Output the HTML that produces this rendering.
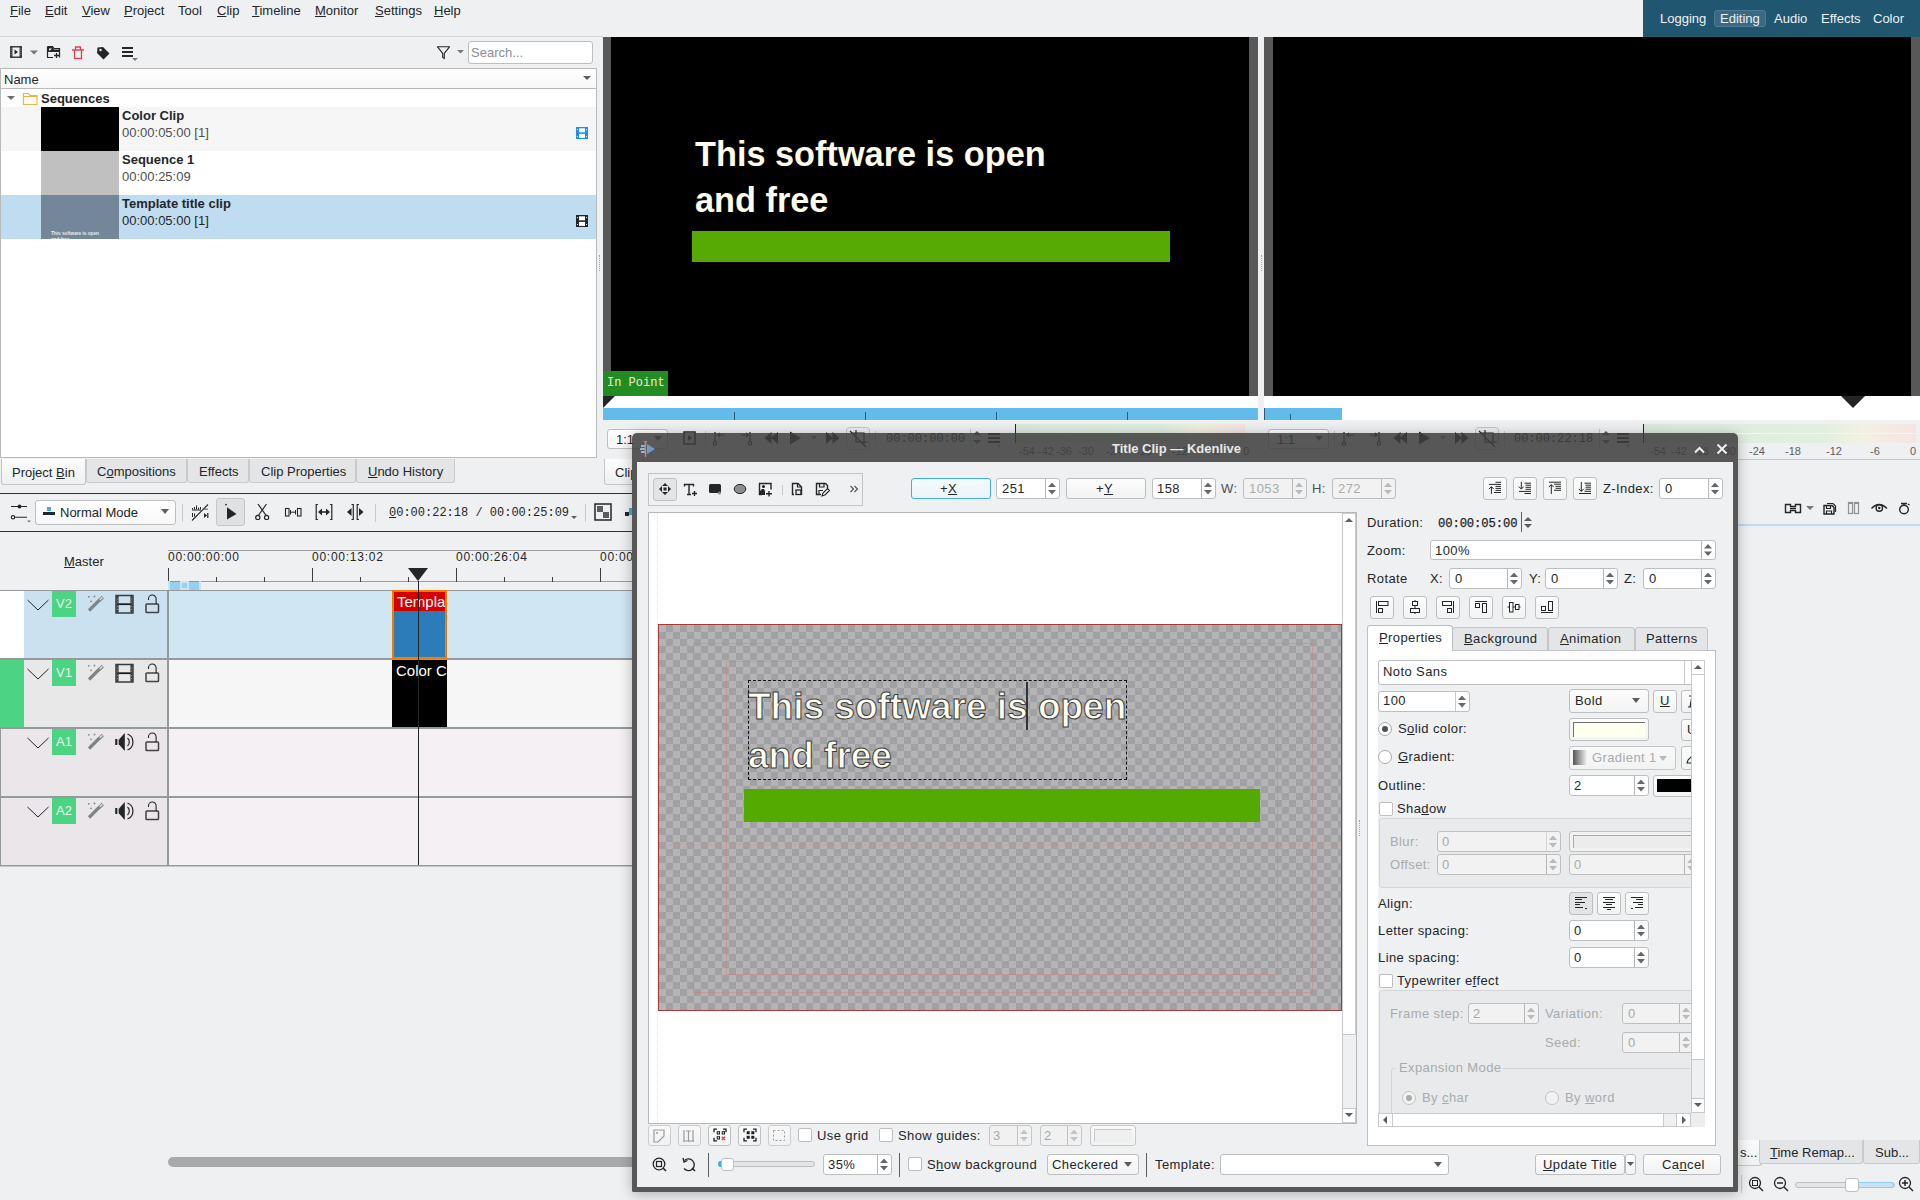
<!DOCTYPE html>
<html><head><meta charset="utf-8">
<style>
*{box-sizing:border-box;margin:0;padding:0}
html,body{width:1920px;height:1200px;overflow:hidden;background:#eff0f1;font-family:"Liberation Sans",sans-serif;font-size:13px;color:#232629;position:relative}
.a{position:absolute}
.t{position:absolute;white-space:nowrap;line-height:1}
.mono{font-family:"Liberation Mono",monospace}
u{text-decoration:underline;text-underline-offset:1px;text-decoration-thickness:1px}
.tab{position:absolute;background:#e3e5e7;border:1px solid #c3c5c7;border-bottom:none;border-radius:3px 3px 0 0;color:#232629}
.spin{position:absolute;background:#fff;border:1px solid #bcbebf;border-radius:3px}
.spin::before{content:"";position:absolute;right:13px;top:0;bottom:0;width:1px;background:#b4b6b8}
.spin::after{content:"";position:absolute;right:3px;top:50%;width:8px;height:12px;margin-top:-6px;background:#65686a;
clip-path:polygon(0 38%,50% 0,100% 38%,50% 38%,50% 62%,100% 62%,50% 100%,0 62%,50% 62%,50% 38%)}
.spin.dis::after{background:#b8babc}
.spin.nosp::before,.spin.nosp::after{display:none}
.meter{background:linear-gradient(#f3f6f3,#f3f6f3) 0 9px/100% 1px no-repeat,linear-gradient(90deg,#dde9dd,#dfeddf 20%,#e0efe0 65%,#f2f1e2 80%,#f6e4e4)}
#dlg .t:not(.mono){letter-spacing:.4px}
#sc .t{margin-top:-1px}
.btn{position:absolute;background:linear-gradient(#fcfcfc,#f2f3f3);border:1px solid #bcbebf;border-radius:3px}
.sep{position:absolute;width:1px;background:#c8c9ca}
</style></head><body>

<!-- MENU BAR -->
<div id="menu">
<span class="t" style="left:10px;top:4px"><u>F</u>ile</span>
<span class="t" style="left:45px;top:4px"><u>E</u>dit</span>
<span class="t" style="left:82px;top:4px"><u>V</u>iew</span>
<span class="t" style="left:124px;top:4px"><u>P</u>roject</span>
<span class="t" style="left:178px;top:4px">Tool</span>
<span class="t" style="left:217px;top:4px"><u>C</u>lip</span>
<span class="t" style="left:252px;top:4px"><u>T</u>imeline</span>
<span class="t" style="left:315px;top:4px"><u>M</u>onitor</span>
<span class="t" style="left:375px;top:4px"><u>S</u>ettings</span>
<span class="t" style="left:434px;top:4px"><u>H</u>elp</span>
</div>
<div class="a" style="left:0;top:36px;width:603px;height:1px;background:#d4d5d6"></div>

<!-- workspace switcher -->
<div class="a" style="left:1643px;top:0;width:277px;height:37px;background:#215670"></div>
<div class="a" style="left:1714px;top:10px;width:52px;height:17px;background:#3b6983;border:1px solid #4a7a94;border-radius:3px"></div>
<span class="t" style="left:1660px;top:12px;color:#eef1f3">Logging</span>
<span class="t" style="left:1720px;top:12px;color:#eef1f3">Editing</span>
<span class="t" style="left:1774px;top:12px;color:#eef1f3">Audio</span>
<span class="t" style="left:1821px;top:12px;color:#eef1f3">Effects</span>
<span class="t" style="left:1873px;top:12px;color:#eef1f3">Color</span>

<!-- BIN -->
<div id="bin">
<!-- toolbar icons -->
<svg class="a" style="left:8px;top:44px" width="134" height="18" viewBox="0 0 134 18">
 <rect x="2" y="2" width="12" height="12" fill="#3a3c3e"/><rect x="4.5" y="3.5" width="7" height="9" fill="#eff0f1"/><path d="M3.2 4v8M12.8 4v8" stroke="#8a8c8e" stroke-width=".8" stroke-dasharray="1 1"/><path d="M6.5 5.5v5l3.5-2.5z" fill="#232629"/>
 <path d="M22 6.5h8l-4 4z" fill="#747678"/>
 <path d="M39.5 2.5h5l1.5 2h5.5v9M39.5 2.5v11h5.5" fill="none" stroke="#232629" stroke-width="1.2"/><path d="M40 3h4.5l1.5 2.5h5.5v2.5h-11.5z" fill="#232629"/><path d="M41 4.5h3l-2 2h-1z" fill="#eff0f1"/><path d="M48.5 9v5M46 11.5h5" stroke="#232629" stroke-width="1.3"/>
 <path d="M64 6h12M67.5 6V3h5v3M66.5 6v8.5h7V6" fill="none" stroke="#da4453" stroke-width="1.3"/>
 <path d="M89.5 3.5l5.5-.5 6.5 6.5-6 6-6.5-6.5z" fill="#232629"/><circle cx="92.5" cy="6" r="1.2" fill="#eff0f1"/>
 <path d="M114 4h11M114 8h11M114 12h11" stroke="#232629" stroke-width="1.8"/><path d="M124 14h6l-3 3z" fill="#747678"/>
</svg>
<svg class="a" style="left:435px;top:45px" width="32" height="15" viewBox="0 0 32 15">
 <path d="M2.5 1.8h12l-5.2 6.6v5.2l-1.6-1.2V8.4z" fill="none" stroke="#232629" stroke-width="1.1" stroke-linejoin="round"/>
 <path d="M22 5l3.5 3.5 3.5-3.5z" fill="#747678"/>
</svg>
<div class="a" style="left:468px;top:41px;width:125px;height:23px;background:#fff;border:1px solid #bcbebf;border-radius:3px"></div>
<span class="t" style="left:471px;top:46px;color:#888e93;font-size:13px">Search...</span>

<!-- list -->
<div class="a" style="left:0;top:68px;width:597px;height:390px;background:#fff;border:1px solid #b8babc"></div>
<div class="a" style="left:1px;top:69px;width:595px;height:20px;background:linear-gradient(#fff,#f7f7f7);border-bottom:1px solid #b8babc"></div>
<span class="t" style="left:4px;top:73px">Name</span>
<svg class="a" style="left:582px;top:75px" width="10" height="6"><path d="M1 1h8l-4 4z" fill="#5b5d5f"/></svg>
<svg class="a" style="left:6px;top:95px" width="10" height="6"><path d="M1 1h8l-4 4z" fill="#6b6d6f"/></svg>
<svg class="a" style="left:22px;top:91px" width="16" height="15"><path d="M1.5 2.5h5l1.5 2h7v9h-13.5z M1.5 5.5h13.5" fill="none" stroke="#f7b13e" stroke-width="1.2"/></svg>
<span class="t" style="left:41px;top:92px;font-weight:bold">Sequences</span>

<div class="a" style="left:1px;top:107px;width:595px;height:44px;background:#f6f6f6"></div>
<div class="a" style="left:1px;top:195px;width:595px;height:44px;background:#c0dcf1"></div>
<div class="a" style="left:41px;top:107px;width:78px;height:44px;background:#000"></div>
<div class="a" style="left:41px;top:151px;width:78px;height:44px;background:#c0c0c0"></div>
<div class="a" style="left:41px;top:195px;width:78px;height:44px;background:#74879a;overflow:hidden"><div class="t" style="left:10px;top:36px;font-size:4.7px;font-weight:bold;color:#e8ecef;line-height:6px">This software is open<br>and free</div></div>
<span class="t" style="left:122px;top:109px;font-weight:bold">Color Clip</span>
<span class="t" style="left:122px;top:126px;color:#4d4f51">00:00:05:00 [1]</span>
<span class="t" style="left:122px;top:153px;font-weight:bold">Sequence 1</span>
<span class="t" style="left:122px;top:170px;color:#4d4f51">00:00:25:09</span>
<span class="t" style="left:122px;top:197px;font-weight:bold">Template title clip</span>
<span class="t" style="left:122px;top:214px;color:#232629">00:00:05:00 [1]</span>
<svg class="a" style="left:576px;top:127px" width="12" height="12" viewBox="0 0 12 12"><rect width="12" height="12" fill="#1d8ef2"/><rect x="3" y="1.3" width="6" height="4" fill="#fff"/><rect x="3" y="6.9" width="6" height="4" fill="#fff"/><circle cx="1.5" cy="2.6" r=".6" fill="#fff"/><circle cx="10.5" cy="2.6" r=".6" fill="#fff"/><circle cx="1.5" cy="9.5" r=".6" fill="#fff"/><circle cx="10.5" cy="9.5" r=".6" fill="#fff"/></svg>
<svg class="a" style="left:576px;top:215px" width="12" height="12" viewBox="0 0 12 12"><rect width="12" height="12" fill="#232629"/><rect x="3" y="1.3" width="6" height="4" fill="#fff"/><rect x="3" y="6.9" width="6" height="4" fill="#fff"/><circle cx="1.5" cy="2.6" r=".6" fill="#fff"/><circle cx="10.5" cy="2.6" r=".6" fill="#fff"/><circle cx="1.5" cy="9.5" r=".6" fill="#fff"/><circle cx="10.5" cy="9.5" r=".6" fill="#fff"/></svg>

<!-- bin tabs -->
<div class="a" style="left:1px;top:459px;width:85px;height:26px;background:linear-gradient(#fcfcfc,#eff0f1);border:1px solid #c3c5c7;border-top:none;border-radius:0 0 3px 3px"></div>
<div class="a" style="left:86px;top:459px;width:101px;height:24px;background:#e3e5e7;border:1px solid #c8cacc;border-top:none;border-radius:0 0 3px 3px"></div>
<div class="a" style="left:187px;top:459px;width:62px;height:24px;background:#e3e5e7;border:1px solid #c8cacc;border-top:none;border-radius:0 0 3px 3px"></div>
<div class="a" style="left:249px;top:459px;width:107px;height:24px;background:#e3e5e7;border:1px solid #c8cacc;border-top:none;border-radius:0 0 3px 3px"></div>
<div class="a" style="left:356px;top:459px;width:99px;height:24px;background:#e3e5e7;border:1px solid #c8cacc;border-top:none;border-radius:0 0 3px 3px"></div>
<span class="t" style="left:12px;top:466px">Project <u>B</u>in</span>
<span class="t" style="left:97px;top:465px">C<u>o</u>mpositions</span>
<span class="t" style="left:199px;top:465px">Effects</span>
<span class="t" style="left:261px;top:465px">Clip Properties</span>
<span class="t" style="left:368px;top:465px"><u>U</u>ndo History</span>
<div class="a" style="left:604px;top:459px;width:40px;height:26px;background:linear-gradient(#fcfcfc,#eff0f1);border:1px solid #c3c5c7;border-top:none;border-radius:0 0 3px 3px"></div>
<span class="t" style="left:615px;top:466px">Clip</span>
</div>

<!-- MONITORS -->
<div id="mon">
<!-- left monitor -->
<div class="a" style="left:603px;top:37px;width:655px;height:359px;background:#585858"></div>
<div class="a" style="left:611px;top:37px;width:638px;height:359px;background:#000"></div>
<div class="t" style="left:695px;top:131px;font-size:34.3px;font-weight:bold;color:#fdfbe9;line-height:46px">This software is open<br>and free</div>
<div class="a" style="left:692px;top:231px;width:478px;height:31px;background:#57aa03"></div>
<div class="a" style="left:603px;top:371px;width:65px;height:25px;background:#228b22"></div>
<span class="t mono" style="left:607px;top:377px;color:#f0f0d8;font-size:12px">In Point</span>
<div class="a" style="left:603px;top:396px;width:655px;height:12px;background:#fff"></div>
<svg class="a" style="left:603px;top:396px" width="12" height="12"><path d="M0 0h12L0 12z" fill="#232629"/></svg>
<div class="a" style="left:603px;top:408px;width:655px;height:12px;background:#63bbe9"></div>
<div class="a" style="left:734px;top:412px;width:1px;height:8px;background:#2a5b78"></div>
<div class="a" style="left:865px;top:412px;width:1px;height:8px;background:#2a5b78"></div>
<div class="a" style="left:996px;top:412px;width:1px;height:8px;background:#2a5b78"></div>
<div class="a" style="left:1127px;top:412px;width:1px;height:8px;background:#2a5b78"></div>
<!-- right monitor -->
<div class="a" style="left:1264px;top:37px;width:656px;height:359px;background:#585858"></div>
<div class="a" style="left:1273px;top:37px;width:638px;height:359px;background:#000"></div>
<div class="a" style="left:1264px;top:396px;width:656px;height:24px;background:#fff"></div>
<div class="a" style="left:1264px;top:408px;width:78px;height:12px;background:#63bbe9"></div>
<div class="a" style="left:1264px;top:408px;width:1px;height:12px;background:#2a5b78"></div>
<div class="a" style="left:1290px;top:414px;width:1px;height:6px;background:#2a5b78"></div>
<svg class="a" style="left:1841px;top:396px" width="24" height="12"><path d="M0 0h24L12 12z" fill="#232629"/></svg>
<!-- left monitor toolbar (mostly under dialog) -->
<div class="btn" style="left:607px;top:429px;width:61px;height:20px;background:linear-gradient(#fff,#f7f7f7)"></div>
<span class="t" style="left:616px;top:433px">1:1</span>
<svg class="a" style="left:653px;top:436px" width="10" height="6"><path d="M1 0h8l-4 5z" fill="#5b5d5f"/></svg>
<svg class="a" style="left:680px;top:426px" width="330" height="24" viewBox="0 0 330 24">
 <rect x="4" y="6" width="11" height="12" fill="none" stroke="#232629" stroke-width="1.5"/><path d="M8 9v6l4-3z" fill="#232629"/>
 <g id="montb">
 <path d="M25.5 5v15" stroke="#c8c9ca"/>
 <path d="M35 6v10" stroke="#232629" stroke-width="1.2"/><circle cx="35" cy="17.5" r="1.8" fill="none" stroke="#232629" stroke-width="1.1"/><path d="M45 9h-7M40 7l-2 2 2 2" fill="none" stroke="#232629" stroke-width="1.1"/>
 <path d="M70 6v10" stroke="#232629" stroke-width="1.2"/><circle cx="70" cy="17.5" r="1.8" fill="none" stroke="#232629" stroke-width="1.1"/><path d="M61 9h7M66 7l2 2-2 2" fill="none" stroke="#232629" stroke-width="1.1"/>
 <path d="M91 12l7-6v12zM84.5 12l7-6v12z" fill="#232629"/>
 <path d="M110 5.5l11 6.5-11 6.5z" fill="#232629"/>
 <path d="M131 10h6l-3 3z" fill="#747678"/>
 <path d="M146 6v12l7-6zM152.5 6v12l7-6z" fill="#232629"/>
 <rect x="166.5" y="1.5" width="23" height="22" rx="3" fill="#eceeef" stroke="#c3c5c7"/>
 <path d="M172 7h12v12M176 4v12h12M170 5l16 16" fill="none" stroke="#232629" stroke-width="1.2"/>
 <path d="M195.5 5v15" stroke="#c8c9ca"/>
 <path d="M290.5 3v20" stroke="#c8c9ca"/><path d="M293 9h8l-4-4zM293 14h8l-4 4z" fill="#5b5d5f"/>
 <path d="M308 8h12M308 12h12M308 16h12" stroke="#232629" stroke-width="2"/><path d="M317 19l2 2 2-2z" fill="#747678"/>
 </g>
</svg>
<span class="t mono" style="left:886px;top:433px;font-size:12px">00:00:00:00</span>
<div class="a" style="left:1015px;top:424px;width:1px;height:19px;background:#232629"></div>
<div class="a meter" style="left:1016px;top:424px;width:229px;height:19px"></div>
<span class="t" style="left:1019px;top:446px;font-size:11px;color:#5b5d5f">-54</span>
<span class="t" style="left:1038px;top:446px;font-size:11px;color:#5b5d5f">-42</span>
<span class="t" style="left:1056px;top:446px;font-size:11px;color:#5b5d5f">-36</span>
<span class="t" style="left:1078px;top:446px;font-size:11px;color:#5b5d5f">-30</span>
<span class="t" style="left:1106px;top:446px;font-size:11px;color:#5b5d5f">-24</span>
<span class="t" style="left:1136px;top:446px;font-size:11px;color:#5b5d5f">-18</span>
<span class="t" style="left:1172px;top:446px;font-size:11px;color:#5b5d5f">-12</span>
<span class="t" style="left:1210px;top:446px;font-size:11px;color:#5b5d5f">-6</span>
<span class="t" style="left:1243px;top:446px;font-size:11px;color:#5b5d5f">0</span>
<!-- right monitor toolbar -->
<div class="btn" style="left:1268px;top:429px;width:61px;height:20px;background:linear-gradient(#fff,#f7f7f7)"></div>
<span class="t" style="left:1277px;top:433px">1:1</span>
<svg class="a" style="left:1314px;top:436px" width="10" height="6"><path d="M1 0h8l-4 5z" fill="#5b5d5f"/></svg>
<svg class="a" style="left:1309px;top:426px" width="330" height="24" viewBox="0 0 330 24"><use href="#montb"/></svg>
<span class="t mono" style="left:1514px;top:433px;font-size:12px">00:00:22:18</span>
<div class="a" style="left:1643px;top:424px;width:1px;height:19px;background:#232629"></div>
<div class="a meter" style="left:1644px;top:424px;width:272px;height:19px"></div>
<span class="t" style="left:1650px;top:446px;font-size:11px;color:#5b5d5f">-54</span>
<span class="t" style="left:1671px;top:446px;font-size:11px;color:#5b5d5f">-42</span>
<span class="t" style="left:1693px;top:446px;font-size:11px;color:#5b5d5f">-36</span>
<span class="t" style="left:1720px;top:446px;font-size:11px;color:#5b5d5f">-30</span>
<span class="t" style="left:1749px;top:446px;font-size:11px;color:#5b5d5f">-24</span>
<span class="t" style="left:1785px;top:446px;font-size:11px;color:#5b5d5f">-18</span>
<span class="t" style="left:1826px;top:446px;font-size:11px;color:#5b5d5f">-12</span>
<span class="t" style="left:1870px;top:446px;font-size:11px;color:#5b5d5f">-6</span>
<span class="t" style="left:1910px;top:446px;font-size:11px;color:#5b5d5f">0</span>
<div class="a" style="left:1738px;top:459px;width:182px;height:1px;background:#c3c5c7"></div>
</div>

<div class="a" style="left:599px;top:255px;width:1px;height:16px;border-left:1px dotted #a0a2a4"></div>
<div class="a" style="left:1261px;top:255px;width:1px;height:16px;border-left:1px dotted #a0a2a4"></div>
<!-- TIMELINE -->
<div id="tl">
<div class="a" style="left:0;top:493px;width:1733px;height:1px;background:#2f3133"></div>
<div class="a" style="left:0;top:531px;width:1733px;height:1px;background:#2f3133"></div>
<svg class="a" style="left:8px;top:502px" width="26" height="22" viewBox="0 0 26 22">
 <path d="M3 4.5h16M6.5 15.3h12.5" stroke="#232629" stroke-width="1.1"/><circle cx="11.5" cy="4.5" r="1.9" fill="#232629"/><circle cx="5" cy="15.3" r="1.7" fill="#fff" stroke="#232629" stroke-width="1.1"/>
 <path d="M19 18.5h4l-2 2z" fill="#747678"/>
</svg>
<div class="btn" style="left:35px;top:500px;width:141px;height:25px;background:linear-gradient(#fff,#f7f7f7)"></div>
<div class="a" style="left:43px;top:512px;width:12px;height:3px;background:#232629"></div>
<div class="a" style="left:47px;top:507px;width:4px;height:4px;background:#3daee9"></div>
<span class="t" style="left:60px;top:506px">Normal Mode</span>
<svg class="a" style="left:160px;top:509px" width="10" height="6"><path d="M1 0h8l-4 5z" fill="#5b5d5f"/></svg>
<div class="sep" style="left:182px;top:504px;height:18px"></div>
<div class="a" style="left:216px;top:498px;width:29px;height:28px;background:#e0e1e2;border:1px solid #c3c5c7;border-radius:3px"></div>
<svg class="a" style="left:188px;top:500px" width="190" height="24" viewBox="0 0 190 24">
 <path d="M4 20.5L20 4.5" stroke="#232629" stroke-width="1.1"/>
 <path d="M4.5 9.5v-1.5M6.5 9.5v-2.5M8.5 9.5v-4M10.5 9.5v-2M12.5 9.5v-2.5M4 10h9M17 8.5v1.5M19 8.5v1.5" stroke="#232629" stroke-width="1"/>
 <path d="M4.5 13v4M6.5 13.5v3" stroke="#232629" stroke-width="1"/>
 <path d="M16 13l3 2.5-3 2.5z" fill="#232629"/><path d="M19.8 13v5" stroke="#232629" stroke-width="1.2"/>
 <circle cx="38" cy="4.6" r=".9" fill="#232629"/><path d="M39 7.2l9.5 6.8-9.5 5.5z" fill="#232629"/>
 <path d="M70 4l8.5 12M78.5 4L70 16" stroke="#232629" stroke-width="1.2"/><circle cx="69.8" cy="17.4" r="2.1" fill="#eff0f1" stroke="#232629" stroke-width="1.2"/><circle cx="78.6" cy="17.4" r="2.1" fill="#eff0f1" stroke="#232629" stroke-width="1.2"/>
 <rect x="97.5" y="8.5" width="3.5" height="7.5" fill="none" stroke="#232629" stroke-width="1.1"/><rect x="109.5" y="8.5" width="3.5" height="7.5" fill="none" stroke="#232629" stroke-width="1.1"/><path d="M102.5 10v4.5M107.5 10v4.5M103 12.2h4" stroke="#232629" stroke-width="1"/>
 <path d="M130 4.5h-1.8v15h1.8M142 4.5h1.8v15h-1.8" fill="none" stroke="#232629" stroke-width="1.2"/><path d="M130 12l4-3.5v7zM142 12l-4-3.5v7z" fill="#232629"/><path d="M133 12h6" stroke="#232629" stroke-width="1.5"/>
 <path d="M159 12l4.5-4v8zM175.5 12l-4.5-4v8z" fill="#232629"/><path d="M163.5 4.5h1.8v15h-1.8M171 4.5h-1.8v15h1.8" fill="none" stroke="#232629" stroke-width="1.2"/>
</svg>
<div class="sep" style="left:375px;top:504px;height:18px"></div>
<span class="t mono" style="left:389px;top:507px;font-size:12px"><u>0</u>0:00:22:18 / 00:00:25:09</span>
<svg class="a" style="left:570px;top:515px" width="8" height="6"><path d="M1 1h6l-3 3z" fill="#5b5d5f"/></svg>
<div class="sep" style="left:585px;top:504px;height:18px"></div>
<svg class="a" style="left:594px;top:503px" width="18" height="18"><rect x="1" y="1" width="16" height="16" fill="none" stroke="#232629" stroke-width="1.5"/><path d="M3 9h6V3H3zM9 15h6V9H9z" fill="#5b5d5f"/></svg>
<div class="a" style="left:625px;top:512px;width:4px;height:4px;background:#232629"></div><div class="a" style="left:629px;top:508px;width:3px;height:7px;background:#3daee9"></div>

<!-- ruler -->
<span class="t" style="left:64px;top:555px"><u>M</u>aster</span>
<div class="a" style="left:168px;top:550px;width:464px;height:1px;background:#9a9c9e"></div>
<span class="t" style="left:168px;top:551px;font-size:12px;letter-spacing:.75px">00:00:00:00</span>
<span class="t" style="left:312px;top:551px;font-size:12px;letter-spacing:.75px">00:00:13:02</span>
<span class="t" style="left:456px;top:551px;font-size:12px;letter-spacing:.75px">00:00:26:04</span>
<span class="t" style="left:600px;top:551px;font-size:12px;letter-spacing:.75px">00:00:</span>
<div class="a" style="left:168px;top:581px;width:464px;height:1px;background:#9a9c9e"></div>
<svg class="a" style="left:168px;top:566px" width="464" height="16">
 <path d="M0.5 2v14M144.5 2v14M288.5 2v14M432.5 2v14M48.5 11v5M96.5 11v5M192.5 11v5M240.5 11v5M336.5 11v5M384.5 11v5" stroke="#3b3d3f"/>
</svg>
<div class="a" style="left:168px;top:582px;width:464px;height:8px;background:#eff0f1"></div>
<div class="a" style="left:168px;top:581px;width:33px;height:9px;background:#c9e5f5"></div><div class="a" style="left:170px;top:581px;width:10px;height:9px;background:#97cfed;border-top:1px solid #62a4cf"></div><div class="a" style="left:189px;top:581px;width:10px;height:9px;background:#97cfed;border-top:1px solid #62a4cf"></div><div class="a" style="left:182px;top:583px;width:5px;height:5px;background:#9ad1ee"></div>

<!-- tracks -->
<div class="a" style="left:24px;top:591px;width:143px;height:67px;background:#cbe1f0"></div>
<div class="a" style="left:0;top:591px;width:24px;height:67px;background:#fff"></div>
<div class="a" style="left:168px;top:591px;width:464px;height:67px;background:#d1e6f3"></div>
<div class="a" style="left:24px;top:660px;width:143px;height:67px;background:#e8e8e8"></div>
<div class="a" style="left:0;top:660px;width:24px;height:67px;background:#4cd384"></div>
<div class="a" style="left:168px;top:660px;width:464px;height:67px;background:#f6f6f6"></div>
<div class="a" style="left:0;top:729px;width:167px;height:67px;background:#ebe6ea"></div>
<div class="a" style="left:168px;top:729px;width:464px;height:67px;background:#f5f0f3"></div>
<div class="a" style="left:0;top:798px;width:167px;height:67px;background:#ebe6ea"></div>
<div class="a" style="left:168px;top:798px;width:464px;height:67px;background:#f5f0f3"></div>
<div class="a" style="left:0;top:729px;width:1px;height:137px;background:#94999b"></div>
<div class="a" style="left:0;top:590px;width:632px;height:1px;background:#94999b"></div>
<div class="a" style="left:0;top:658px;width:632px;height:2px;background:#94999b"></div>
<div class="a" style="left:0;top:727px;width:632px;height:2px;background:#94999b"></div>
<div class="a" style="left:0;top:796px;width:632px;height:2px;background:#94999b"></div>
<div class="a" style="left:0;top:865px;width:632px;height:1px;background:#94999b"></div>
<div class="a" style="left:0;top:866px;width:632px;height:1px;background:#c4c7c9"></div>
<div class="a" style="left:167px;top:591px;width:2px;height:275px;background:#94999b"></div>

<svg class="a" style="left:0;top:590px" width="168" height="276" viewBox="0 0 168 276">
 <g id="th">
 <path d="M27.5 10l10.5 10 10.5-10" fill="none" stroke="#232629" stroke-width="1"/>
 <path d="M89 20.5l10.5-10.5" stroke="#7f8587" stroke-width="3.2"/><path d="M99.3 10.5l3.5-3.5" stroke="#7f8587" stroke-width="3.2"/><path d="M99.8 9.8l2.6-2.6" stroke="#dfe3e5" stroke-width="1.4"/>
 <circle cx="88.8" cy="6.8" r=".9" fill="#7f8587"/><circle cx="94.5" cy="6.5" r=".9" fill="#7f8587"/><circle cx="91" cy="11.3" r=".9" fill="#7f8587"/>
 </g>
 <use href="#th" y="69"/><use href="#th" y="138"/><use href="#th" y="207"/>
 <rect x="52" y="1" width="24" height="26" fill="#4cd384"/><rect x="52" y="70" width="24" height="26" fill="#4cd384"/><rect x="52" y="139" width="24" height="26" fill="#4cd384"/><rect x="52" y="208" width="24" height="26" fill="#4cd384"/>
 <g id="film" transform="translate(0 1)"><rect x="116" y="4.5" width="17" height="17.5" fill="none" stroke="#393b3d" stroke-width="1.5"/><path d="M117.5 13.2h14" stroke="#1a1c1e" stroke-width="1.8"/><path d="M117.5 5v16.5M131.5 5v16.5" stroke="#393b3d" stroke-width="2.2"/><path d="M117.5 7.5v1M117.5 10.5v1M117.5 15v1M117.5 18v1M131.5 7.5v1M131.5 10.5v1M131.5 15v1M131.5 18v1" stroke="#8a8c8e" stroke-width="1"/></g>
 <use href="#film" y="69"/>
 <g id="lock"><rect x="146" y="14" width="12.5" height="8.5" rx=".8" fill="none" stroke="#3f4143" stroke-width="1.5"/><path d="M148.5 10v-1.2a3.8 3.8 0 0 1 7.6 0v5.2" fill="none" stroke="#232629" stroke-width="1.1"/></g>
 <use href="#lock" y="69"/><use href="#lock" y="138"/><use href="#lock" y="207"/>
 <g id="spk"><rect x="115.2" y="149" width="2" height="6" fill="#232629"/><path d="M117.2 149.5h1.6v5h-1.6z" fill="#9a9c9e"/><path d="M119 149.5l5.8-6.5v18l-5.8-6.5z" fill="#232629"/><path d="M127.5 148a5.3 5.3 0 0 1 0 8M127.5 144a8.6 8.6 0 0 1 0 16" fill="none" stroke="#232629" stroke-width="1.2"/></g>
 <use href="#spk" y="69"/>
</svg>
<span class="t" style="left:56px;top:597px;color:#eaf6ea;font-size:13px">V2</span>
<span class="t" style="left:56px;top:666px;color:#eaf6ea;font-size:13px">V1</span>
<span class="t" style="left:56px;top:735px;color:#eaf6ea;font-size:13px">A1</span>
<span class="t" style="left:56px;top:804px;color:#eaf6ea;font-size:13px">A2</span>

<!-- clips -->
<div class="a" style="left:392px;top:660px;width:55px;height:67px;background:#000;overflow:hidden"><span class="t" style="left:4px;top:3px;color:#fff;font-size:15px">Color Clip</span></div>
<div class="a" style="left:392px;top:590px;width:55px;height:69px;background:#2b7cb8;border:2px solid #f57a00;overflow:hidden">
 <div class="a" style="left:0;top:0;width:51px;height:19px;background:#d40000"></div>
 <span class="t" style="left:3px;top:2px;color:#fff;font-size:15px">Template</span>
</div>
<div class="a" style="left:418px;top:581px;width:1px;height:284px;background:#232629"></div>
<svg class="a" style="left:408px;top:568px" width="21" height="14"><path d="M0 0h20L10 13z" fill="#232629"/></svg>

<!-- h scrollbar -->
<div class="a" style="left:168px;top:1157px;width:470px;height:10px;background:#a8a9aa;border-radius:5px"></div>

<!-- right side timeline toolbar -->
<svg class="a" style="left:1780px;top:500px" width="134" height="18" viewBox="0 0 134 18">
 <path d="M5.5 4.5h5v2h5v-2h5v8h-5v-2h-5v2h-5z" fill="none" stroke="#232629" stroke-width="1.4"/><path d="M10 8.5h6" stroke="#232629" stroke-width="1.4"/>
 <path d="M26 6h8l-4 4z" fill="#747678"/>
 <path d="M44 5.5h8l2 2v6.5h-10z" fill="none" stroke="#232629" stroke-width="1.4"/><path d="M46.5 5.5v3h4v-3M46.5 14v-3h5v3" fill="none" stroke="#232629" stroke-width="1.2"/><path d="M47 3.5h6l2.5 2.5v6" fill="none" stroke="#232629" stroke-width="1.2"/>
 <rect x="68.5" y="2.5" width="4" height="11" fill="none" stroke="#8e9092" stroke-width="1.2"/><rect x="74.5" y="2.5" width="4" height="11" fill="none" stroke="#8e9092" stroke-width="1.2"/><path d="M68 3h5M74 3h5" stroke="#8e9092" stroke-width="2"/>
 <path d="M91.5 8.5q7.5-8 15.5 0" fill="none" stroke="#232629" stroke-width="1.3"/><circle cx="99.3" cy="8" r="3.2" fill="none" stroke="#232629" stroke-width="1.4"/><circle cx="99.3" cy="8" r="1.2" fill="#232629"/>
 <circle cx="124" cy="9.5" r="4.3" fill="none" stroke="#232629" stroke-width="1.4"/><path d="M121 3.5h6M124 3.5v2M128 4l1.5 1" stroke="#232629" stroke-width="1.3"/>
</svg>
<div class="a" style="left:1738px;top:524px;width:182px;height:2px;background:#bcdcf2"></div>
<div class="a" style="left:1700px;top:1140px;width:62px;height:26px;background:linear-gradient(#fcfcfc,#eff0f1);border:1px solid #c3c5c7;border-top:none;border-radius:0 0 3px 3px"></div>
<div class="a" style="left:1759px;top:1140px;width:104px;height:24px;background:#e3e5e7;border:1px solid #c8cacc;border-top:none;border-radius:0 0 3px 3px"></div>
<div class="a" style="left:1863px;top:1140px;width:57px;height:24px;background:#e3e5e7;border:1px solid #c8cacc;border-top:none;border-radius:0 0 3px 3px"></div>
<span class="t" style="left:1740px;top:1146px">s...</span>
<span class="t" style="left:1770px;top:1146px"><u>T</u>ime Remap...</span>
<span class="t" style="left:1875px;top:1146px">Sub...</span>
<div class="sep" style="left:1741px;top:1175px;height:18px"></div>
<svg class="a" style="left:1748px;top:1176px" width="172" height="18" viewBox="0 0 172 18">
 <circle cx="7" cy="7" r="5.5" fill="none" stroke="#232629" stroke-width="1.3"/><rect x="4.5" y="4.5" width="5" height="5" fill="none" stroke="#232629"/><path d="M11 11l4 4" stroke="#232629" stroke-width="1.5"/>
 <circle cx="32" cy="7" r="5.5" fill="none" stroke="#232629" stroke-width="1.3"/><path d="M29 7h6" stroke="#232629" stroke-width="1.5"/><path d="M36 11l4 4" stroke="#232629" stroke-width="1.5"/>
 <circle cx="157" cy="7" r="5.5" fill="none" stroke="#232629" stroke-width="1.3"/><path d="M154 7h6M157 4v6" stroke="#232629" stroke-width="1.5"/><path d="M161 11l4 4" stroke="#232629" stroke-width="1.5"/>
</svg>
<div class="a" style="left:1795px;top:1182px;width:100px;height:6px;background:#e3e5e7;border:1px solid #bcbebf;border-radius:3px"></div>
<div class="a" style="left:1852px;top:1182px;width:42px;height:6px;background:#c7e2f4;border:1px solid #93cee9;border-radius:3px"></div>
<div class="a" style="left:1845px;top:1178px;width:14px;height:14px;background:#fff;border:1px solid #bcbebf;border-radius:3px"></div>
</div>

<!-- DIALOG -->
<div id="dlg">
<!-- shadow -->
<div class="a" style="left:632px;top:433px;width:1106px;height:759px;border-radius:5px 5px 2px 2px;box-shadow:0 2px 14px rgba(0,0,0,.28)"></div>
<!-- frame -->
<div class="a" style="left:632px;top:433px;width:1106px;height:29px;background:rgba(62,62,62,.86);border-radius:5px 5px 0 0"></div>
<div class="a" style="left:632px;top:462px;width:1106px;height:730px;border:5px solid #575757;border-top:none;border-radius:0 0 2px 2px;background:#eff0f1"></div>
<svg class="a" style="left:638px;top:440px" width="18" height="18" viewBox="0 0 18 18">
 <path d="M3 6h5M2 9h6M3 12h5" stroke="#8ab6e0" stroke-width="2"/><path d="M9 4l8 5-8 5z" fill="#6c9bd2"/><path d="M7.5 2v15" stroke="#d9806a" stroke-width="1.5"/><path d="M5.5 1h4l-2 2z" fill="#d9806a"/>
</svg>
<span class="t" style="left:1112px;top:442px;color:#e8e8e8;font-weight:bold;font-size:13px;letter-spacing:0">Title Clip — Kdenlive</span>
<svg class="a" style="left:1690px;top:440px" width="40" height="16" viewBox="0 0 40 16">
 <path d="M5 12.5l4.5-4.5 4.5 4.5" fill="none" stroke="#f0f0f0" stroke-width="2"/>
 <path d="M27.5 4.5l9 9M36.5 4.5l-9 9" stroke="#f0f0f0" stroke-width="2"/>
</svg>

<!-- top toolbar -->
<div class="a" style="left:648px;top:473px;width:215px;height:33px;border:1px solid #c2c4c6;background:#eff0f1"></div>
<div class="a" style="left:653px;top:478px;width:24px;height:23px;background:#e3e4e5;border:1px solid #bfc1c3;border-radius:3px"></div>
<svg class="a" style="left:650px;top:478px" width="212" height="22" viewBox="0 0 212 22">
 <path d="M15 5l-3 3h6zM15 17l-3-3h6zM9 11l3-3v6zM21 11l-3-3v6z" fill="#232629"/><rect x="13.5" y="9.5" width="3" height="3" fill="#232629"/>
 <path d="M34 6.5h10M34.5 6v2.5M43.5 6v2.5M39 6.5v10M37 16.5h4M42 15.5h5M44.5 13v5" fill="none" stroke="#232629" stroke-width="1.4"/>
 <rect x="59" y="6" width="12" height="9" rx="1.5" fill="#232629"/><circle cx="69.5" cy="15" r="1.6" fill="#8a8c8e"/>
 <ellipse cx="90" cy="11" rx="5.8" ry="4.6" fill="#8a8c8e" stroke="#232629" stroke-width="1"/>
 <path d="M112 16.5h-2.5V5.5h11.5v6" fill="none" stroke="#232629" stroke-width="1.4"/><circle cx="113.5" cy="8.5" r="1.6" fill="#232629"/><path d="M110 17v-4l2-2h2l1 2v4z" fill="#232629"/><path d="M119 13v5.5M116 15.8h6" stroke="#232629" stroke-width="1.4"/>
 <path d="M132.5 7v10" stroke="#c8c9ca"/>
 <path d="M144 16.5h-1.5v-11h5.5l3.5 3.5v8" fill="none" stroke="#232629" stroke-width="1.4"/><path d="M147.5 5.5v3.5h3.5" fill="none" stroke="#232629" stroke-width="1.2"/><rect x="146" y="12" width="5" height="4.5" fill="none" stroke="#232629" stroke-width="1.3"/>
 <path d="M171 16.5h-4.5v-11h9l2 2v3" fill="none" stroke="#232629" stroke-width="1.4"/><path d="M169.5 5.5v3.5h4.5V5.5" fill="none" stroke="#232629" stroke-width="1.2"/><path d="M169 16.5v-4h4" fill="none" stroke="#232629" stroke-width="1.2"/><path d="M172 18l1-3 4.5-4.5 2 2-4.5 4.5z" fill="none" stroke="#232629" stroke-width="1.1"/>
 <path d="M200.5 8l3 3-3 3M204.5 8l3 3-3 3" fill="none" stroke="#4d4f51" stroke-width="1.1"/>
</svg>
<div class="btn" style="left:911px;top:478px;width:80px;height:21px;border-color:#3daee9;background:linear-gradient(#f5fafd,#eaf4fa)"></div>
<span class="t" style="left:940px;top:482px;font-size:13px">+<u>X</u></span>
<div class="spin" style="left:996px;top:478px;width:64px;height:21px"></div>
<span class="t" style="left:1002px;top:482px;font-size:13px">251</span>
<div class="btn" style="left:1066px;top:478px;width:80px;height:21px"></div>
<span class="t" style="left:1096px;top:482px;font-size:13px">+<u>Y</u></span>
<div class="spin" style="left:1152px;top:478px;width:64px;height:21px"></div>
<span class="t" style="left:1157px;top:482px;font-size:13px">158</span>
<span class="t" style="left:1221px;top:482px;font-size:13px;color:#4d4f51">W:</span>
<div class="spin dis" style="left:1243px;top:478px;width:64px;height:21px;background:#f2f2f3"></div>
<span class="t" style="left:1249px;top:482px;font-size:13px;color:#a8aaac">1053</span>
<span class="t" style="left:1312px;top:482px;font-size:13px;color:#4d4f51">H:</span>
<div class="spin dis" style="left:1332px;top:478px;width:64px;height:21px;background:#f2f2f3"></div>
<span class="t" style="left:1338px;top:482px;font-size:13px;color:#a8aaac">272</span>
<div class="btn" style="left:1483px;top:477px;width:24px;height:23px"></div>
<div class="btn" style="left:1513px;top:477px;width:24px;height:23px"></div>
<div class="btn" style="left:1543px;top:477px;width:24px;height:23px"></div>
<div class="btn" style="left:1573px;top:477px;width:24px;height:23px"></div>
<svg class="a" style="left:1483px;top:477px" width="114" height="23" viewBox="0 0 114 23">
 <g stroke="#232629" stroke-width="1" fill="none">
 <path d="M12.5 5.3h5.5M6 7.4h12M12.5 9.4h5.5M12.5 11.4h5.5M12.5 13.4h5.5M11 15.5h7M8.4 9.8v7M6 12.1l2.4-2.5 2.4 2.5"/>
 <path transform="translate(30 0)" d="M11.5 6.2h6.5M12.5 8.2h5.5M12.5 10.3h5.5M12.5 12.3h5.5M6 14.4h12M11.5 16.5h6.5M8.3 4.8v7M5.9 9.6l2.4 2.5 2.4-2.5"/>
 <path transform="translate(60 0)" d="M6 5.2h12M11 7.2h7M12.5 9.3h5.5M12.5 11.3h5.5M11 13.3h7M8.3 7.8v9.2M5.9 10.1l2.4-2.5 2.4 2.5"/>
 <path transform="translate(90 0)" d="M11.5 6.2h6.5M12.5 8.2h5.5M12.5 10.2h5.5M12.5 12.2h5.5M11.5 14.3h6.5M6 16.5h12M8.3 5v9.2M5.9 11.9l2.4 2.5 2.4-2.5"/>
 </g>
</svg>
<span class="t" style="left:1603px;top:482px;font-size:13px">Z-Index:</span>
<div class="spin" style="left:1659px;top:478px;width:64px;height:21px"></div>
<span class="t" style="left:1665px;top:482px;font-size:13px">0</span>

<!-- canvas view -->
<div class="a" style="left:648px;top:512px;width:709px;height:612px;background:#fff;border:1px solid #b6b8ba"></div>
<div class="a" style="left:657px;top:513px;width:0;height:610px;border-left:1px dotted #d6ecd6"></div>
<div class="a" id="checker" style="left:658px;top:624px;width:684px;height:387px;border:1px solid #a83838;
 background-color:#b4b4b4;
 background-image:linear-gradient(45deg,#a1a0a5 25%,transparent 25%,transparent 75%,#a1a0a5 75%),linear-gradient(45deg,#a1a0a5 25%,transparent 25%,transparent 75%,#a1a0a5 75%);
 background-size:14px 14px;background-position:0 0,7px 7px"></div>
<div class="a" style="left:693px;top:643px;width:620px;height:350px;border:1px solid rgba(220,120,120,.45)"></div>
<div class="a" style="left:726px;top:661px;width:552px;height:314px;border:1px solid rgba(220,120,120,.45)"></div>
<div class="a" style="left:659px;top:844px;width:682px;height:0;border-top:1px dashed rgba(220,140,140,.5)"></div>
<div class="a" style="left:744px;top:789px;width:516px;height:33px;background:#55aa00"></div>
<div class="t" style="left:748px;top:682px;font-size:37px;font-weight:bold;color:#fdfdf0;line-height:49px;-webkit-text-stroke:1px #3c3c3c;letter-spacing:0">This software is open<br>and free</div>
<div class="a" style="left:748px;top:680px;width:379px;height:100px;border:1px dashed #111"></div>
<div class="a" style="left:1026px;top:682px;width:2px;height:48px;background:#333"></div>
<!-- canvas scrollbar -->
<div class="a" style="left:1342px;top:513px;width:14px;height:610px;background:#eff0f1;border-left:1px solid #c8c9ca"></div>
<div class="a" style="left:1342px;top:513px;width:14px;height:522px;background:#fff;border:1px solid #c8c9ca"></div>
<div class="a" style="left:1342px;top:1108px;width:14px;height:15px;background:#fff;border:1px solid #c8c9ca"></div>
<svg class="a" style="left:1343px;top:515px" width="12" height="10"><path d="M2 7h8L6 3z" fill="#5b5d5f"/></svg>
<svg class="a" style="left:1343px;top:1110px" width="12" height="10"><path d="M2 3h8L6 7z" fill="#5b5d5f"/></svg>

<!-- bottom toolbar row1 -->
<div class="btn" style="left:648px;top:1125px;width:23px;height:21px;opacity:.7"></div>
<div class="btn" style="left:678px;top:1125px;width:23px;height:21px;opacity:.7"></div>
<div class="btn" style="left:708px;top:1125px;width:23px;height:21px"></div>
<div class="btn" style="left:738px;top:1125px;width:23px;height:21px"></div>
<div class="btn" style="left:768px;top:1125px;width:23px;height:21px;opacity:.7"></div>
<svg class="a" style="left:648px;top:1125px" width="143" height="21" viewBox="0 0 143 21">
 <path d="M6 5h10v6l-6 6H6z" fill="none" stroke="#9a9c9e" stroke-width="1.2"/><circle cx="9" cy="8" r="1" fill="#9a9c9e"/>
 <path d="M36 5v12M45 5v12M38 6h5M40.5 6v11M35 16h11" stroke="#9a9c9e" stroke-width="1.2"/>
 <g fill="none" stroke="#1d1f21" stroke-width="1.3"><path d="M66 7.2V4.2h3M75 4.2h3v3M66 12.8v3h3"/><rect x="69.2" y="6.7" width="2.3" height="2.3" stroke-width="1"/><rect x="74.2" y="6.7" width="2.3" height="2.3" stroke-width="1"/><rect x="69.2" y="11.7" width="2.3" height="2.3" stroke-width="1"/></g><path d="M73.8 11.8l3.2 3.2M77 11.8l-3.2 3.2" stroke="#da4453" stroke-width="1.3"/>
 <g fill="none" stroke="#1d1f21" stroke-width="1.3"><path d="M96 7.2V4.2h3M105 4.2h3v3M96 12.8v3h3M105 15.8h3v-3"/></g><rect x="98.7" y="6.2" width="3" height="3" fill="#1d1f21"/><rect x="103.3" y="6.2" width="3" height="3" fill="#1d1f21"/><rect x="98.7" y="10.8" width="3" height="3" fill="#1d1f21"/><rect x="103.3" y="10.8" width="3" height="3" fill="#1d1f21"/>
 <rect x="125.5" y="5.5" width="11" height="10" fill="none" stroke="#9a9c9e" stroke-dasharray="2 2"/>
</svg>
<div class="a" style="left:798px;top:1128px;width:14px;height:14px;background:#fff;border:1px solid #bcbebf;border-radius:2px"></div>
<span class="t" style="left:817px;top:1129px;font-size:13px">Use grid</span>
<div class="a" style="left:879px;top:1128px;width:14px;height:14px;background:#fff;border:1px solid #bcbebf;border-radius:2px"></div>
<span class="t" style="left:898px;top:1129px;font-size:13px">Show guides:</span>
<div class="spin dis" style="left:989px;top:1125px;width:43px;height:21px;background:#f2f2f3;opacity:.8"></div>
<span class="t" style="left:993px;top:1129px;font-size:13px;color:#a8aaac">3</span>
<div class="spin dis" style="left:1040px;top:1125px;width:42px;height:21px;background:#f2f2f3;opacity:.8"></div>
<span class="t" style="left:1044px;top:1129px;font-size:13px;color:#a8aaac">2</span>
<div class="btn" style="left:1090px;top:1125px;width:46px;height:21px;opacity:.8"></div>
<div class="a" style="left:1094px;top:1129px;width:38px;height:13px;border:1px solid #c8c9ca;border-right-color:#eee;border-bottom-color:#eee;background:#f0f0f0"></div>

<!-- bottom row2 -->
<svg class="a" style="left:650px;top:1156px" width="52" height="18" viewBox="0 0 52 18">
 <circle cx="9" cy="8" r="5.8" fill="none" stroke="#232629" stroke-width="1.3"/><rect x="6.5" y="5.5" width="5" height="5" fill="none" stroke="#232629" stroke-width="1.2"/><path d="M13 12l3 3" stroke="#232629" stroke-width="1.6"/>
 <path d="M34.5 4.5A5.8 5.8 0 1 1 34 12.5" fill="none" stroke="#232629" stroke-width="1.3"/><path d="M33 2l1 4 3.5-1.5" fill="none" stroke="#232629" stroke-width="1.3"/><path d="M42 12l3 3" stroke="#232629" stroke-width="1.6"/>
</svg>
<div class="sep" style="left:708px;top:1153px;height:24px;background:#5b5d5f"></div>
<div class="a" style="left:718px;top:1161px;width:97px;height:6px;background:#e3e5e7;border:1px solid #bcbebf;border-radius:3px"></div>
<div class="a" style="left:718px;top:1161px;width:8px;height:6px;background:#3daee9;border-radius:3px"></div>
<div class="a" style="left:721px;top:1158px;width:13px;height:13px;background:#fff;border:1px solid #bcbebf;border-radius:3px"></div>
<div class="spin" style="left:823px;top:1154px;width:69px;height:21px"></div>
<span class="t" style="left:828px;top:1158px;font-size:13px">35%</span>
<div class="sep" style="left:899px;top:1153px;height:24px;background:#5b5d5f"></div>
<div class="a" style="left:908px;top:1157px;width:14px;height:14px;background:#fff;border:1px solid #bcbebf;border-radius:2px"></div>
<span class="t" style="left:927px;top:1158px;font-size:13px">S<u>h</u>ow background</span>
<div class="btn" style="left:1047px;top:1154px;width:92px;height:21px"></div>
<span class="t" style="left:1052px;top:1158px;font-size:13px">Checkered</span><svg class="a" style="left:1123px;top:1162px" width="10" height="6"><path d="M1 0h8l-4 5z" fill="#5b5d5f"/></svg>
<div class="sep" style="left:1146px;top:1153px;height:24px;background:#5b5d5f"></div>
<span class="t" style="left:1155px;top:1158px;font-size:13px">Template:</span>
<div class="btn" style="left:1220px;top:1154px;width:229px;height:21px;background:#fff"></div><svg class="a" style="left:1433px;top:1162px" width="10" height="6"><path d="M1 0h8l-4 5z" fill="#5b5d5f"/></svg>
<div class="btn" style="left:1535px;top:1154px;width:90px;height:21px"></div>
<span class="t" style="left:1543px;top:1158px;font-size:13px"><u>U</u>pdate Title</span>
<div class="btn" style="left:1625px;top:1154px;width:11px;height:21px"></div><svg class="a" style="left:1626px;top:1162px" width="9" height="6"><path d="M1 0h7l-3.5 4z" fill="#5b5d5f"/></svg>
<div class="btn" style="left:1643px;top:1154px;width:78px;height:21px"></div>
<span class="t" style="left:1662px;top:1158px;font-size:13px">Ca<u>n</u>cel</span>

<div class="a" style="left:1359px;top:820px;width:1px;height:16px;border-left:1px dotted #a0a2a4"></div>
<!-- right panel -->
<span class="t" style="left:1367px;top:516px;font-size:13px">Duration:</span>
<span class="t mono" style="left:1438px;top:518px;font-size:12.2px;-webkit-text-stroke:.25px #232629;letter-spacing:-.1px">00:00:05:00</span>
<div class="a" style="left:1521px;top:512px;width:1px;height:20px;background:#5b5d5f"></div><div class="spin nosp" style="left:1500px;top:512px;width:34px;height:20px;background:none;border:none"></div><svg class="a" style="left:1523px;top:516px" width="10" height="13"><path d="M1 5h8L5 1zM1 8h8l-4 4z" fill="#5b5d5f"/></svg>
<span class="t" style="left:1367px;top:544px;font-size:13px">Zoom:</span>
<div class="spin" style="left:1430px;top:540px;width:286px;height:20px"></div>
<span class="t" style="left:1435px;top:544px;font-size:13px">100%</span>
<span class="t" style="left:1367px;top:572px;font-size:13px">Rotate</span>
<span class="t" style="left:1430px;top:572px;font-size:13px">X:</span>
<div class="spin" style="left:1449px;top:568px;width:73px;height:21px"></div>
<span class="t" style="left:1455px;top:572px;font-size:13px">0</span>
<span class="t" style="left:1529px;top:572px;font-size:13px">Y:</span>
<div class="spin" style="left:1545px;top:568px;width:73px;height:21px"></div>
<span class="t" style="left:1551px;top:572px;font-size:13px">0</span>
<span class="t" style="left:1624px;top:572px;font-size:13px">Z:</span>
<div class="spin" style="left:1643px;top:568px;width:73px;height:21px"></div>
<span class="t" style="left:1649px;top:572px;font-size:13px">0</span>
<div class="btn" style="left:1370px;top:596px;width:24px;height:23px"></div>
<div class="btn" style="left:1403px;top:596px;width:24px;height:23px"></div>
<div class="btn" style="left:1436px;top:596px;width:24px;height:23px"></div>
<div class="btn" style="left:1469px;top:596px;width:24px;height:23px"></div>
<div class="btn" style="left:1502px;top:596px;width:24px;height:23px"></div>
<div class="btn" style="left:1535px;top:596px;width:24px;height:23px"></div>
<svg class="a" style="left:1370px;top:596px" width="190" height="23" viewBox="0 0 190 23">
 <g fill="none" stroke="#232629" stroke-width="1">
 <path d="M6.5 5v12"/><rect x="8.5" y="5.5" width="9.5" height="4"/><rect x="8.5" y="12.5" width="4" height="4"/>
 <g transform="translate(33 0)"><path d="M12 4v1.5M12 9.5v3M12 16.5v1.5"/><rect x="9.5" y="5.5" width="5" height="4"/><rect x="7.5" y="12.5" width="9" height="4"/></g>
 <g transform="translate(66 0)"><path d="M17.5 5v12"/><rect x="6.5" y="5.5" width="9" height="4"/><rect x="11.5" y="12.5" width="4" height="4"/></g>
 <g transform="translate(99 0)"><path d="M6 5.5h12"/><rect x="6.5" y="7.5" width="4" height="4"/><rect x="13.5" y="7.5" width="4" height="9"/></g>
 <g transform="translate(132 0)"><path d="M5.5 11h1.5M11 11h2.5M17 11h1.5"/><rect x="7.5" y="6.5" width="3.5" height="9.5"/><rect x="13.5" y="8.5" width="3.5" height="5"/></g>
 <g transform="translate(165 0)"><path d="M6 16.5h12"/><rect x="6.5" y="10.5" width="4" height="4"/><rect x="13.5" y="5.5" width="4" height="9"/></g>
 </g>
</svg>
<!-- tabs -->
<div class="a" style="left:1367px;top:650px;width:349px;height:496px;background:#fff;border:1px solid #bcbebf"></div>
<div class="a" style="left:1452px;top:627px;width:96px;height:24px;background:#e3e5e7;border:1px solid #c3c5c7;border-radius:3px 3px 0 0"></div>
<div class="a" style="left:1548px;top:627px;width:87px;height:24px;background:#e3e5e7;border:1px solid #c3c5c7;border-radius:3px 3px 0 0"></div>
<div class="a" style="left:1635px;top:627px;width:73px;height:24px;background:#e3e5e7;border:1px solid #c3c5c7;border-radius:3px 3px 0 0"></div>
<div class="a" style="left:1367px;top:625px;width:86px;height:26px;background:#fff;border:1px solid #bcbebf;border-bottom:none;border-radius:3px 3px 0 0"></div>
<span class="t" style="left:1379px;top:631px;font-size:13px"><u>P</u>roperties</span>
<span class="t" style="left:1464px;top:632px;font-size:13px"><u>B</u>ackground</span>
<span class="t" style="left:1560px;top:632px;font-size:13px"><u>A</u>nimation</span>
<span class="t" style="left:1646px;top:632px;font-size:13px">Patterns</span>

<!-- scroll content -->
<div class="a" id="sc" style="left:1378px;top:660px;width:313px;height:453px;background:#eff0f1;overflow:hidden">
 <div class="spin nosp" style="left:0;top:0;width:320px;height:25px"></div>
 <div class="a" style="left:306px;top:1px;width:1px;height:23px;background:#c8c9ca"></div>
 <span class="t" style="left:5px;top:6px;font-size:13px">Noto Sans</span>
 <div class="spin" style="left:0;top:31px;width:92px;height:21px"></div>
 <div class="a" style="left:77px;top:32px;width:1px;height:19px;background:#c8c9ca"></div>
 <span class="t" style="left:5px;top:35px;font-size:13px">100</span>
 <div class="btn" style="left:191px;top:29px;width:80px;height:24px"></div>
 <span class="t" style="left:197px;top:35px;font-size:13px">Bold</span>
 <svg class="a" style="left:253px;top:38px" width="10" height="6"><path d="M1 0h8l-4 5z" fill="#5b5d5f"/></svg>
 <div class="btn" style="left:275px;top:30px;width:24px;height:23px"></div>
 <span class="t" style="left:282px;top:35px;font-size:13px"><u>U</u></span>
 <div class="btn" style="left:303px;top:30px;width:24px;height:23px"></div><svg class="a" style="left:303px;top:30px" width="24" height="23"><path d="M8 6h6M11 6l-2 11M7 17h5" stroke="#232629" stroke-width="1.2" fill="none"/></svg>
 <div class="a" style="left:0;top:62px;width:14px;height:14px;border-radius:50%;background:#fff;border:1px solid #a8aaac"></div>
 <div class="a" style="left:4px;top:66px;width:6px;height:6px;border-radius:50%;background:#4d4f51"></div>
 <span class="t" style="left:20px;top:63px;font-size:13px">S<u>o</u>lid color:</span>
 <div class="btn" style="left:191px;top:58px;width:80px;height:23px"></div>
 <div class="a" style="left:195px;top:62px;width:72px;height:15px;background:#fffff0;border-top:1px solid #6d6f71;border-left:1px solid #6d6f71"></div>
 <div class="btn" style="left:303px;top:59px;width:24px;height:22px"></div><span class="t" style="left:309px;top:64px;font-size:13px">U</span>
 <div class="a" style="left:0;top:90px;width:14px;height:14px;border-radius:50%;background:#fff;border:1px solid #a8aaac"></div>
 <span class="t" style="left:20px;top:91px;font-size:13px"><u>G</u>radient:</span>
 <div class="btn" style="left:191px;top:86px;width:107px;height:24px;opacity:.85"></div>
 <div class="a" style="left:195px;top:90px;width:15px;height:15px;background:linear-gradient(90deg,#555,#fff)"></div>
 <span class="t" style="left:214px;top:92px;font-size:13px;color:#a8aaac">Gradient 1</span><svg class="a" style="left:280px;top:96px" width="10" height="6"><path d="M1 0h8l-4 5z" fill="#b8babc"/></svg>
 <div class="btn" style="left:303px;top:86px;width:24px;height:24px"></div><svg class="a" style="left:303px;top:86px" width="24" height="24"><path d="M6 17h4l7-7-3-3-7 7z" stroke="#232629" stroke-width="1.1" fill="none"/></svg>
 <span class="t" style="left:0;top:120px;font-size:13px">Outline:</span>
 <div class="spin" style="left:191px;top:115px;width:80px;height:21px"></div>
 <span class="t" style="left:196px;top:120px;font-size:13px">2</span>
 <div class="btn" style="left:275px;top:115px;width:40px;height:22px"></div>
 <div class="a" style="left:279px;top:119px;width:40px;height:13px;background:#000"></div>
 <div class="a" style="left:1px;top:142px;width:14px;height:14px;background:#fff;border:1px solid #bcbebf;border-radius:2px"></div>
 <span class="t" style="left:19px;top:143px;font-size:13px">Sha<u>d</u>ow</span>
 <div class="a" style="left:1px;top:158px;width:330px;height:70px;background:#e9eaeb;border:1px solid #d3d5d7;border-radius:3px"></div>
 <span class="t" style="left:12px;top:176px;font-size:13px;color:#a8aaac">Blur:</span>
 <div class="spin dis" style="left:59px;top:171px;width:124px;height:21px;background:#f2f2f3"></div>
 <span class="t" style="left:64px;top:176px;font-size:13px;color:#a8aaac">0</span>
 <div class="a" style="left:168px;top:172px;width:1px;height:19px;background:#d5d6d7"></div>
 <div class="spin nosp" style="left:191px;top:171px;width:130px;height:21px;background:#f2f2f3"></div>
 <div class="a" style="left:195px;top:175px;width:120px;height:13px;border-top:1px solid #aaa;border-left:1px solid #aaa;background:#ececec"></div>
 <span class="t" style="left:12px;top:199px;font-size:13px;color:#a8aaac">Offset:</span>
 <div class="spin dis" style="left:59px;top:194px;width:124px;height:21px;background:#f2f2f3"></div>
 <span class="t" style="left:64px;top:199px;font-size:13px;color:#a8aaac">0</span>
 <div class="spin dis" style="left:191px;top:194px;width:130px;height:21px;background:#f2f2f3"></div>
 <span class="t" style="left:196px;top:199px;font-size:13px;color:#a8aaac">0</span>
 <span class="t" style="left:0;top:238px;font-size:13px">Align:</span>
 <div class="btn" style="left:191px;top:232px;width:24px;height:23px;background:#e3e4e5"></div>
 <div class="btn" style="left:219px;top:232px;width:24px;height:23px"></div>
 <div class="btn" style="left:247px;top:232px;width:24px;height:23px"></div>
 <svg class="a" style="left:191px;top:232px" width="80" height="23" viewBox="0 0 80 23"><g stroke="#232629" stroke-width="1">
 <path d="M6 5.5h12M6 7.5h7M6 10.5h10M6 12.5h5M6 15.5h8M16 16.5h2"/>
 <path transform="translate(28.5 0)" d="M5.5 5.5h12M7.5 7.5h8M5.5 10.5h12M8.5 12.5h6M5.5 15.5h12M9.5 17.5h4"/>
 <path transform="translate(56.5 0)" d="M5.5 5.5h12M10.5 7.5h7M7.5 10.5h10M12.5 12.5h5M9.5 15.5h8M5.5 16.5h2"/>
 </g></svg>
 <span class="t" style="left:0;top:265px;font-size:13px">Letter spacing:</span>
 <div class="spin" style="left:191px;top:260px;width:80px;height:21px"></div>
 <span class="t" style="left:196px;top:265px;font-size:13px">0</span>
 <span class="t" style="left:0;top:292px;font-size:13px">Line spacing:</span>
 <div class="spin" style="left:191px;top:287px;width:80px;height:21px"></div>
 <span class="t" style="left:196px;top:292px;font-size:13px">0</span>
 <div class="a" style="left:1px;top:314px;width:14px;height:14px;background:#fff;border:1px solid #bcbebf;border-radius:2px"></div>
 <span class="t" style="left:19px;top:315px;font-size:13px">Typewriter e<u>f</u>fect</span>
 <div class="a" style="left:1px;top:330px;width:330px;height:140px;background:#e9eaeb;border:1px solid #d3d5d7;border-radius:3px"></div>
 <span class="t" style="left:12px;top:348px;font-size:13px;color:#a8aaac">Frame step:</span>
 <div class="spin dis" style="left:90px;top:343px;width:71px;height:21px;background:#f2f2f3"></div>
 <span class="t" style="left:95px;top:348px;font-size:13px;color:#a8aaac">2</span>
 <span class="t" style="left:167px;top:348px;font-size:13px;color:#a8aaac">Variation:</span>
 <div class="spin dis" style="left:244px;top:343px;width:72px;height:21px;background:#f2f2f3"></div>
 <span class="t" style="left:250px;top:348px;font-size:13px;color:#a8aaac">0</span>
 <span class="t" style="left:167px;top:377px;font-size:13px;color:#a8aaac">Seed:</span>
 <div class="spin dis" style="left:244px;top:372px;width:72px;height:21px;background:#f2f2f3"></div>
 <span class="t" style="left:250px;top:377px;font-size:13px;color:#a8aaac">0</span>
 <div class="a" style="left:13px;top:408px;width:330px;height:60px;border:1px solid #d3d5d7;border-radius:3px"></div>
 <div class="a" style="left:18px;top:402px;width:106px;height:12px;background:#e9eaeb"></div>
 <span class="t" style="left:21px;top:402px;font-size:13px;color:#a8aaac">Expansion Mode</span>
 <div class="a" style="left:24px;top:431px;width:14px;height:14px;border-radius:50%;background:#f2f2f3;border:1px solid #c0c2c4"></div>
 <div class="a" style="left:28px;top:435px;width:6px;height:6px;border-radius:50%;background:#a8aaac"></div>
 <span class="t" style="left:44px;top:432px;font-size:13px;color:#a8aaac">By <u>c</u>har</span>
 <div class="a" style="left:167px;top:431px;width:14px;height:14px;border-radius:50%;background:#f2f2f3;border:1px solid #c0c2c4"></div>
 <span class="t" style="left:187px;top:432px;font-size:13px;color:#a8aaac">By <u>w</u>ord</span>
</div>
<!-- v scrollbar -->
<div class="a" style="left:1691px;top:660px;width:14px;height:453px;background:#eff0f1;border:1px solid #c8c9ca"></div>
<div class="a" style="left:1691px;top:660px;width:14px;height:400px;background:#fff;border:1px solid #c8c9ca"></div>
<div class="a" style="left:1691px;top:660px;width:14px;height:15px;background:#fff;border:1px solid #c8c9ca"></div>
<div class="a" style="left:1691px;top:1098px;width:14px;height:15px;background:#fff;border:1px solid #c8c9ca"></div>
<svg class="a" style="left:1692px;top:662px" width="12" height="10"><path d="M2 7h8L6 3z" fill="#5b5d5f"/></svg>
<svg class="a" style="left:1692px;top:1100px" width="12" height="10"><path d="M2 3h8L6 7z" fill="#5b5d5f"/></svg>
<!-- h scrollbar -->
<div class="a" style="left:1378px;top:1113px;width:313px;height:14px;background:#eff0f1;border:1px solid #c8c9ca"></div>
<div class="a" style="left:1378px;top:1113px;width:286px;height:14px;background:#fff;border:1px solid #c8c9ca"></div>
<div class="a" style="left:1378px;top:1113px;width:15px;height:14px;background:#fff;border:1px solid #c8c9ca"></div>
<div class="a" style="left:1676px;top:1113px;width:15px;height:14px;background:#fff;border:1px solid #c8c9ca"></div>
<svg class="a" style="left:1379px;top:1114px" width="13" height="12"><path d="M8 2v8L4 6z" fill="#5b5d5f"/></svg>
<svg class="a" style="left:1677px;top:1114px" width="13" height="12"><path d="M5 2v8L9 6z" fill="#5b5d5f"/></svg>
<div class="a" style="left:1691px;top:1113px;width:14px;height:14px;background:#eceded"></div>
</div>

</body></html>
